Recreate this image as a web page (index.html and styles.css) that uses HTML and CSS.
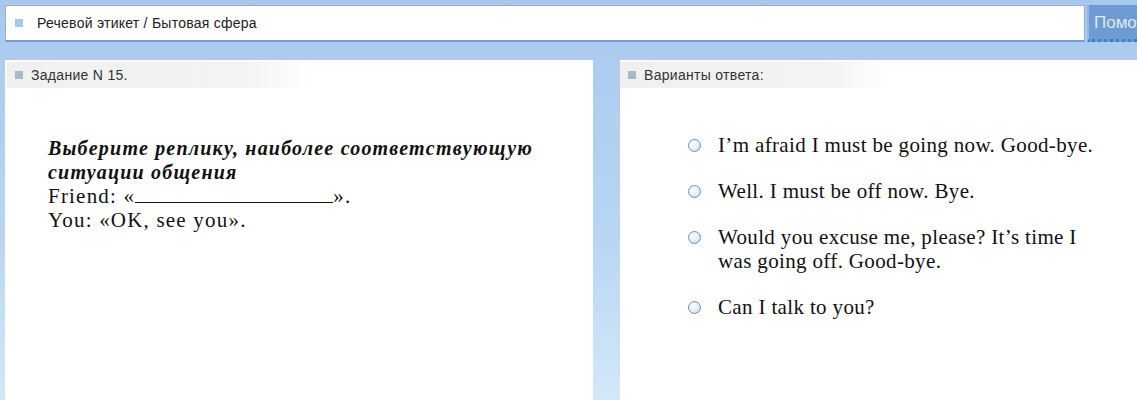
FILE: index.html
```html
<!DOCTYPE html>
<html>
<head>
<meta charset="utf-8">
<link rel="stylesheet" href="styles.css">
</head>
<body>
<div class="page">
  <div class="topbar">
    <div class="crumb"><span class="sq"></span><span>Речевой этикет / Бытовая сфера</span></div>
    <div class="help">Помощь</div>
  </div>
  <div class="panels">
    <div class="panel left">
      <div class="phead"><span class="sq gray"></span><span>Задание N 15.</span></div>
      <div class="question">
        <div class="qtitle">Выберите реплику, наиболее соответствующую ситуации общения</div>
        <div>Friend: «<span class="blank"></span>».</div>
        <div>You: «OK, see you».</div>
      </div>
    </div>
    <div class="panel right">
      <div class="phead"><span class="sq gray"></span><span>Варианты ответа:</span></div>
      <ul class="answers">
        <li><span class="radio"></span><span class="atext">I’m afraid I must be going now. Good-bye.</span></li>
        <li><span class="radio"></span><span class="atext">Well. I must be off now. Bye.</span></li>
        <li><span class="radio"></span><span class="atext">Would you excuse me, please? It’s time I was going off. Good-bye.</span></li>
        <li><span class="radio"></span><span class="atext">Can I talk to you?</span></li>
      </ul>
    </div>
  </div>
</div>
</body>
</html>
```
FILE: styles.css
```css
html, body {
  margin: 0;
  padding: 0;
  height: 100%;
  overflow: hidden;
}
body {
  background: linear-gradient(to bottom, #a8c8ee 0%, #b8d6f4 60%, #d2e8f8 100%);
  font-family: "Liberation Sans", Arial, sans-serif;
}
.page {
  width: 1137px;
  height: 400px;
  display: flex;
  flex-direction: column;
}
.topbar {
  display: flex;
  gap: 2px;
  padding: 5px 0 0 5px;
  height: 37px;
  box-sizing: content-box;
}
.crumb {
  width: 1080px;
  box-sizing: border-box;
  background: #fff;
  border: 1px solid #8fb0d8;
  border-bottom: 2px solid #7c9cc4;
  display: flex;
  align-items: center;
  padding-left: 9px;
  font-size: 14px;
  letter-spacing: 0.25px;
  color: #222;
}
.crumb .sq {
  margin-right: 14px;
}
.sq {
  display: inline-block;
  width: 8px;
  height: 8px;
  background: #a9c6ec;
  flex: none;
}
.sq.gray {
  background: #a9b9c3;
  margin-right: 8px;
}
.help {
  flex: 1;
  background: #6e9bd2;
  border-left: 2px solid #9ab6d8;
  color: #dfe8f4;
  font-size: 17px;
  padding: 8px 0 0 5px;
  box-sizing: border-box;
  white-space: nowrap;
  overflow: hidden;
  border-bottom: 3px dotted #3f7bd0;
}
.panels {
  margin-top: 18px;
  flex: 1;
  display: flex;
  gap: 27px;
  padding-left: 5px;
}
.panel {
  background: #fff;
  padding-top: 2px;
}
.panel.left {
  width: 588px;
}
.panel.right {
  flex: 1;
}
.phead {
  height: 26px;
  display: flex;
  align-items: center;
  padding-left: 8px;
  font-size: 14px;
  letter-spacing: 0.3px;
  color: #333;
  background: linear-gradient(to right, #f0f0f0 0%, #f3f3f3 40%, #ffffff 52%);
}
.panel.left .phead {
  margin-left: 2px;
}
.question {
  padding: 48px 0 0 43px;
  font-family: "Liberation Serif", "Times New Roman", serif;
  font-size: 21px;
  letter-spacing: 1.2px;
  line-height: 24px;
  color: #111;
}
.qtitle {
  font-size: 20px;
  font-weight: bold;
  font-style: italic;
  letter-spacing: 1.2px;
  width: 500px;
}
.blank {
  display: inline-block;
  width: 198px;
  border-bottom: 1px solid #111;
  height: 17px;
  vertical-align: baseline;
}
.answers {
  list-style: none;
  margin: 0;
  padding: 45px 0 0 68px;
  font-family: "Liberation Serif", "Times New Roman", serif;
  font-size: 21px;
  letter-spacing: 0.35px;
  line-height: 24px;
  color: #111;
}
.answers li {
  display: flex;
  align-items: flex-start;
  margin-bottom: 22px;
}
.radio {
  flex: none;
  width: 11px;
  height: 11px;
  border: 1px solid #6f8fb8;
  border-radius: 50%;
  background: radial-gradient(circle at 35% 35%, #ffffff 0%, #e6eef8 50%, #c2d2e6 100%);
  margin: 6px 17px 0 0;
}
.atext {
  width: 380px;
}
```
